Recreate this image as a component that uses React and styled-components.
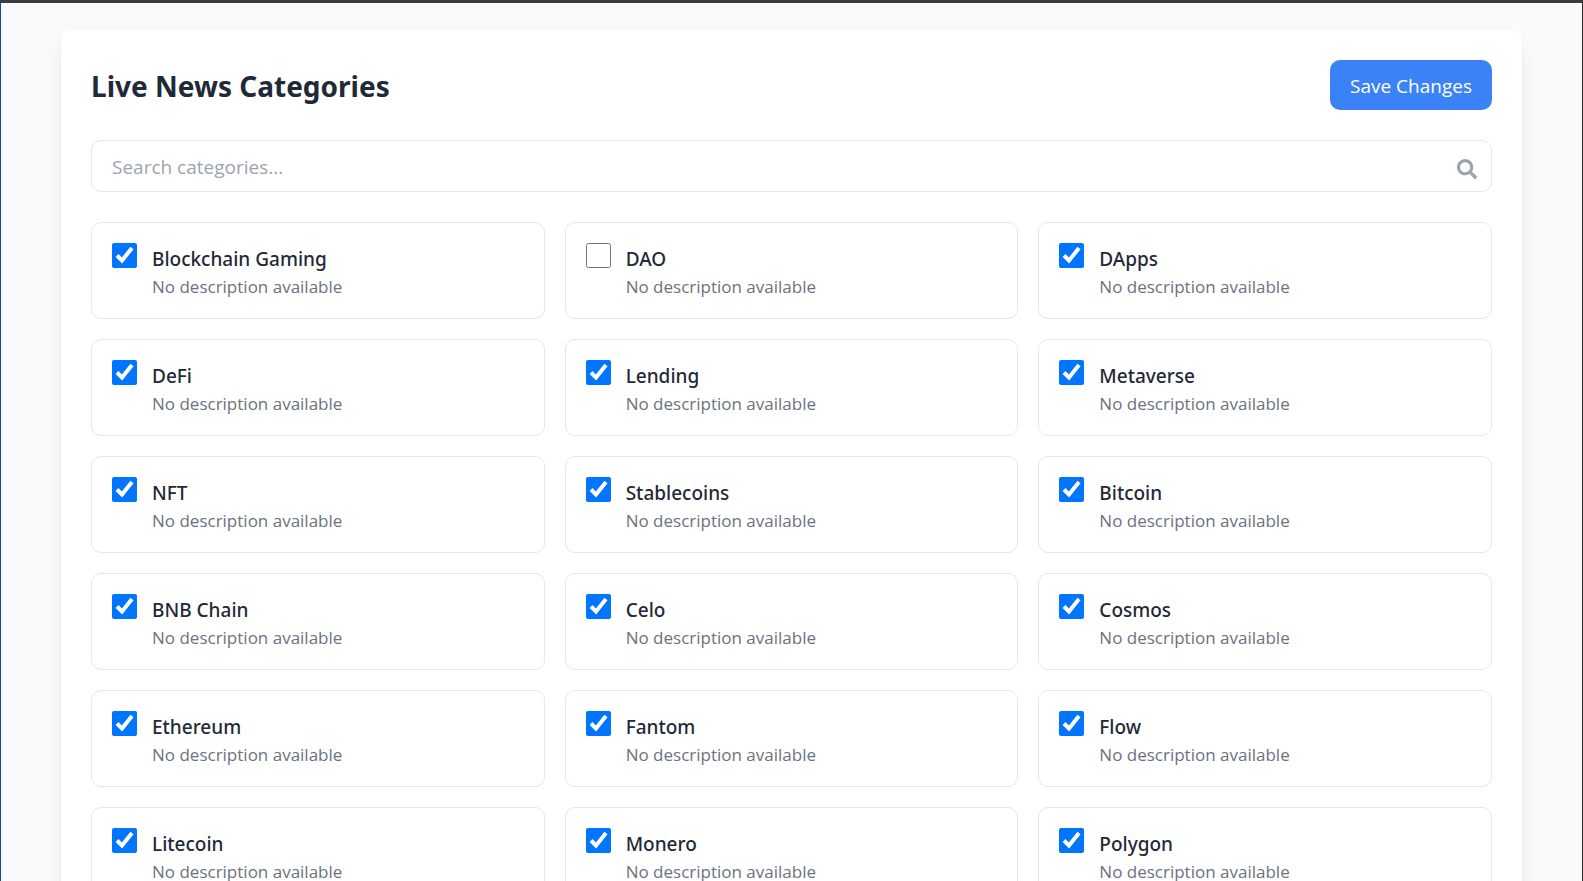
import React, { useState } from 'react';
import styled, { createGlobalStyle } from 'styled-components';
import { FaSearch } from 'react-icons/fa';

const GlobalStyle = createGlobalStyle`
  *, *::before, *::after { box-sizing: border-box; }
  body {
    margin: 0;
    background: #f9fafb;
    color: #1f2937;
    font-family: 'Segoe UI', 'Open Sans', 'Noto Sans', sans-serif;
  }
`;

const Viewport = styled.div`
  height: 100vh;
  overflow-y: auto;
  scrollbar-width: none;
  border: solid #3c3c3c;
  border-width: 3px 1px 0;
  border-left-color: #1e40af;
  border-right-color: #2b2727;
  background: #f9fafb;
`;

const Page = styled.div`
  padding: 27px 60px 30px;
`;

const Panel = styled.main`
  padding: 30px;
  border-radius: 10px;
  background: #fff;
  box-shadow: 0 12px 19px -4px rgba(0, 0, 0, 0.1), 0 5px 8px -5px rgba(0, 0, 0, 0.1);
`;

const Header = styled.header`
  display: flex;
  align-items: center;
  justify-content: space-between;
  margin-bottom: 30px;
`;

const Title = styled.h1`
  margin: 0;
  padding-top: 2px;
  font-family: 'Segoe UI', 'Noto Sans', sans-serif;
  font-size: 28px;
  line-height: 40px;
  font-weight: 700;
`;

const SaveButton = styled.button`
  padding: 11px 20px 9px;
  border: 0;
  border-radius: 10px;
  background: #3b82f6;
  color: #fff;
  font: inherit;
  font-size: 19px;
  line-height: 30px;
  cursor: pointer;

  &:hover { background: #2563eb; }
`;

const SearchBox = styled.label`
  display: flex;
  align-items: center;
  margin-bottom: 30px;
  padding-right: 14px;
  border: 1px solid #e5e7eb;
  border-radius: 10px;
  color: #9ca3af;

  &:focus-within { border-color: #3b82f6; }
`;

const SearchInput = styled.input`
  flex: 1;
  min-width: 0;
  height: 50px;
  padding: 2px 20px 0;
  border: 0;
  outline: 0;
  background: transparent;
  color: #1f2937;
  font: inherit;
  font-size: 19px;

  &::placeholder { color: #9ca3af; opacity: 1; }
`;

const SearchIcon = styled(FaSearch)`
  width: 20px;
  height: 20px;
  margin-top: 5px;
`;

const Grid = styled.div`
  display: grid;
  grid-template-columns: repeat(3, minmax(0, 1fr));
  gap: 20px;
`;

const Card = styled.label`
  display: flex;
  align-items: flex-start;
  gap: 15px;
  padding: 20px;
  border: 1px solid #e5e7eb;
  border-radius: 10px;
  cursor: pointer;
`;

const Checkbox = styled.input`
  flex: none;
  width: 25px;
  height: 25px;
  margin: 0;
`;

const CardText = styled.span`
  display: flex;
  flex-direction: column;
`;

const Name = styled.span`
  font-family: 'Segoe UI', 'Noto Sans', sans-serif;
  font-size: 19px;
  line-height: 32px;
  font-weight: 500;
`;

const Description = styled.span`
  color: #6b7280;
  font-size: 17px;
  line-height: 23px;
`;

const CATEGORIES = [
  'Blockchain Gaming', 'DAO', 'DApps',
  'DeFi', 'Lending', 'Metaverse',
  'NFT', 'Stablecoins', 'Bitcoin',
  'BNB Chain', 'Celo', 'Cosmos',
  'Ethereum', 'Fantom', 'Flow',
  'Litecoin', 'Monero', 'Polygon',
];

function CategoryCard({ name, checked, onChange }) {
  return (
    <Card>
      <Checkbox type="checkbox" checked={checked} onChange={onChange} />
      <CardText>
        <Name>{name}</Name>
        <Description>No description available</Description>
      </CardText>
    </Card>
  );
}

export default function App() {
  const [query, setQuery] = useState('');
  const [selected, setSelected] = useState(
    () => new Set(CATEGORIES.filter((name) => name !== 'DAO'))
  );

  const toggle = (name) =>
    setSelected((current) => {
      const next = new Set(current);
      if (!next.delete(name)) next.add(name);
      return next;
    });

  const visible = CATEGORIES.filter((name) =>
    name.toLowerCase().includes(query.trim().toLowerCase())
  );

  return (
    <>
      <GlobalStyle />
      <Viewport>
        <Page>
          <Panel>
            <Header>
              <Title>Live News Categories</Title>
              <SaveButton type="button">Save Changes</SaveButton>
            </Header>
            <SearchBox>
              <SearchInput
                type="text"
                aria-label="Search categories"
                placeholder="Search categories..."
                value={query}
                onChange={(event) => setQuery(event.target.value)}
              />
              <SearchIcon aria-hidden="true" />
            </SearchBox>
            <Grid>
              {visible.map((name) => (
                <CategoryCard
                  key={name}
                  name={name}
                  checked={selected.has(name)}
                  onChange={() => toggle(name)}
                />
              ))}
            </Grid>
          </Panel>
        </Page>
      </Viewport>
    </>
  );
}
